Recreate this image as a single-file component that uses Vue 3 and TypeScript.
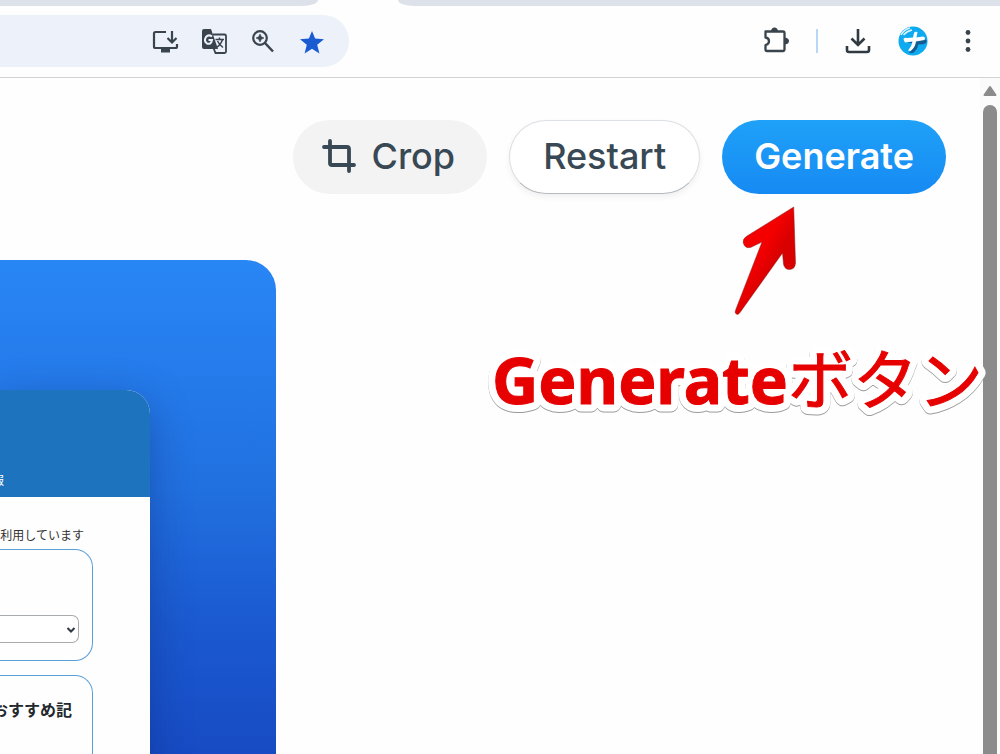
<script setup lang="ts">
import { ref } from 'vue'

const bookmarked = ref(true)
const category = ref('')
</script>

<template>
  <div class="window">
    <div class="tabs">
      <span class="tab tab-left"></span>
      <span class="tab tab-right"></span>
    </div>

    <header class="toolbar">
      <div class="address">
        <button class="icon" aria-label="Install">
          <svg width="28" height="28" viewBox="0 0 28 28" fill="none" stroke="#3a444c" stroke-width="2.2">
            <path d="M15 4H4.500Q3 4 3 5.500V18.500Q3 20 4.500 20H24.500Q26 20 26 18.500V16" />
            <path d="M21 3V14M16.500 10L21 14.500L25.500 10" />
            <path d="M10 22.500H19" stroke-width="4" />
          </svg>
        </button>
        <button class="icon" aria-label="Translate">
          <svg width="28" height="28" viewBox="0 0 28 28">
            <path d="M3 1H11L18 21H4Q2 21 2 19V3Q2 1 4 1Z" fill="#3a444c" />
            <path d="M13 6.500H24.500Q26 6.500 26 8V23.500Q26 25 24.500 25H15.500L13.500 20" fill="none" stroke="#3a444c" stroke-width="1.800" />
            <path d="M12 8.500Q8.500 6 6 9Q3.500 13 7 15.500Q11 17 12 12H8.500" fill="none" stroke="#ecf1fa" stroke-width="2" />
            <path d="M15.500 11.500H24M19.500 9.500V11.500M22.500 11.500Q21 16.500 16.500 19.500M17.500 13Q19.500 17 23 19.500" fill="none" stroke="#3a444c" stroke-width="1.500" />
          </svg>
        </button>
        <button class="icon" aria-label="Zoom">
          <svg width="28" height="28" viewBox="0 0 28 28" fill="none" stroke="#3a444c" stroke-width="2.200">
            <circle cx="11" cy="10" r="6.800" />
            <path d="M16 15L24 23.500" stroke-width="2.500" />
            <path d="M11 6L12.300 8.700L15 10L12.300 11.300L11 14L9.700 11.300L7 10L9.700 8.700Z" fill="#3a444c" stroke="#3a444c" stroke-width="0.600" />
          </svg>
        </button>
        <button class="icon" aria-label="Bookmark" :aria-pressed="bookmarked" @click="bookmarked = !bookmarked">
          <svg width="28" height="28" viewBox="0 0 28 28">
            <path d="M14 3L17.100 10.600L26 11.200L19.200 16.800L21.400 25.400L14 20.700L6.600 25.400L8.800 16.800L2 11.200L10.900 10.600Z" fill="#1a5bd2" />
          </svg>
        </button>
      </div>

      <div class="actions">
        <button class="icon" aria-label="Extensions">
          <svg width="28" height="28" viewBox="0 0 28 28" fill="none" stroke="#3a444c" stroke-width="2.300" stroke-linejoin="round">
            <path d="M3.500 4.500H21Q22.500 4.500 22.500 6V22Q22.500 24 21 24H5Q3.500 24 3.500 22.500V18Q7 17 7 14.200Q7 11 3.500 10.500Z" />
            <path d="M9 4Q9.500 0.500 12.500 0.500Q15.500 0.500 16 4ZM23 10.500Q27 11 27 14Q27 17 23 17.500Z" fill="#3a444c" stroke="none" />
          </svg>
        </button>
        <span class="divider"></span>
        <button class="icon" aria-label="Downloads">
          <svg width="28" height="28" viewBox="0 0 28 28" fill="none" stroke="#303a42" stroke-width="2.600">
            <path d="M14 2V17M7.500 11.500L14 18L20.500 11.500" />
            <path d="M3 19V23Q3 25 5 25H23Q25 25 25 23V19" />
          </svg>
        </button>
        <button class="icon avatar" aria-label="Profile">
          <svg width="30" height="30" viewBox="0 0 30 30">
            <circle cx="15" cy="15" r="14.500" fill="#0eaaf0" />
            <path d="M3 9Q6 3.500 12 2M5.500 9Q9 5 14 4" stroke="#d9f4ff" stroke-width="1.500" fill="none" />
            <path d="M9 17L26 12L29 15Q28 19 20 18.500Q20 23 15 27L11 27Q16 22 16 17Z" fill="#155a91" />
            <path d="M5.500 13.500Q5.500 11 9 12L15 11.500L16 7Q17 5 19.500 6L18.500 11.500L25 10.500Q28 11 26.500 14L18 15.500Q17 22 12.500 25L10 24.500Q14 20 14.500 15.500L7 16.500Z" fill="#fff" />
          </svg>
        </button>
        <button class="icon" aria-label="Menu">
          <svg width="28" height="28" viewBox="0 0 28 28" fill="#3a444c">
            <circle cx="14" cy="5.500" r="2.400" />
            <circle cx="14" cy="14" r="2.400" />
            <circle cx="14" cy="22.500" r="2.400" />
          </svg>
        </button>
      </div>
    </header>

    <div class="body">
      <main class="content">
        <div class="controls">
          <button class="pill crop">
            <svg width="36" height="36" viewBox="0 0 36 36" fill="none" stroke="#384854" stroke-width="3.800" stroke-linecap="round" stroke-linejoin="round">
              <path d="M9 3V25Q9 27 11 27H33" />
              <path d="M3 9H26Q28 9 28 11V33" />
            </svg>
            Crop
          </button>
          <button class="pill restart">Restart</button>
          <button class="pill generate">Generate</button>
        </div>

        <section class="canvas">
          <article class="site">
            <div class="site-head"><span>報</span></div>
            <div class="site-body">
              <p class="notice">利用しています</p>
              <div class="box">
                <div class="field">
                  <select v-model="category" aria-label="カテゴリー">
                    <option value=""></option>
                  </select>
                  <svg class="caret" width="10" height="8" viewBox="0 0 10 8" fill="none" stroke="#303840" stroke-width="2">
                    <path d="M1.500 2L5 5.500L8.500 2" />
                  </svg>
                </div>
              </div>
              <div class="box picks"><h2>おすすめ記</h2></div>
            </div>
          </article>
        </section>
      </main>

      <div class="scrollbar">
        <svg width="16" height="12" viewBox="0 0 16 12">
          <path d="M8 2L13.500 10H2.500Z" fill="#8b8b8b" stroke="#8b8b8b" stroke-width="2" stroke-linejoin="round" />
        </svg>
        <span class="thumb"></span>
      </div>
    </div>

    <svg class="arrow" width="72" height="120" viewBox="0 0 72 120">
      <defs>
        <linearGradient id="arrow-fill" x1="20" y1="45" x2="55" y2="65" gradientUnits="userSpaceOnUse">
          <stop offset="0.300" stop-color="#f40000" />
          <stop offset="0.750" stop-color="#d90000" />
        </linearGradient>
      </defs>
      <path d="M63.700 7L65.500 63Q65 69.500 59.500 69.500Q54.500 69.500 53.500 64L52.500 53L10 112.500Q7.500 116 5.300 113Q4.800 112 6 109L32 42L21 47.300Q15 49 13.300 43Q12.500 38.500 17 36Z" fill="url(#arrow-fill)" stroke="#8a2020" stroke-width="0.500" />
    </svg>

    <svg class="caption" width="520" height="100" viewBox="0 0 520 100">
      <defs>
        <text id="caption-text" x="10" y="75">Generate<tspan class="kana">ボタン</tspan></text>
      </defs>
      <use class="halo" href="#caption-text" />
      <use class="ink" href="#caption-text" />
    </svg>
  </div>
</template>

<style>
html,
body {
  margin: 0;
  background: #fefefe;
}
</style>

<style scoped>
* {
  box-sizing: border-box;
}

.window {
  position: relative;
  display: flex;
  flex-direction: column;
  height: 100vh;
  overflow: hidden;
  background: #fefefe;
  font-family: Inter, "Noto Sans CJK JP", sans-serif;
  color: #384854;
}

button {
  border: 0;
  padding: 0;
  background: none;
  font: inherit;
  color: inherit;
  cursor: pointer;
}

svg {
  display: block;
}

.tabs {
  display: flex;
  gap: 80px;
  height: 6px;
}

.tab {
  background: #dce1ea;
}

.tab-left {
  width: 318px;
  border-bottom-right-radius: 16px 6px;
}

.tab-right {
  flex: 1;
  border-bottom-left-radius: 16px 6px;
}

.toolbar {
  display: flex;
  align-items: center;
  justify-content: space-between;
  height: 72px;
  padding: 0 18px 2px 0;
  border-bottom: 1px solid #d2d3d5;
}

.address {
  display: flex;
  align-items: center;
  justify-content: flex-end;
  gap: 21px;
  width: 349px;
  height: 52px;
  padding: 2px 23px 0 0;
  border-radius: 0 26px 26px 0;
  background: #ecf1fa;
}

.actions {
  display: flex;
  align-items: center;
  gap: 26px;
}

.divider {
  width: 2px;
  height: 24px;
  background: #b9d8f8;
}

.body {
  display: flex;
  flex: 1;
  min-height: 0;
}

.content {
  flex: 1;
  min-width: 0;
  overflow: hidden;
}

.controls {
  display: flex;
  justify-content: flex-end;
  gap: 22px;
  padding: 42px 34px 66px 0;
}

.pill {
  display: flex;
  align-items: center;
  gap: 14px;
  height: 74px;
  padding: 0 32px 2px;
  border-radius: 37px;
  font-size: 36px;
  font-weight: 500;
  line-height: 44px;
}

.crop {
  padding-left: 28px;
  background: #f3f3f3;
}

.restart {
  padding: 0 33px 2px;
  border: 1px solid #dcdfe3;
  border-bottom-color: #b5babf;
  background: #fff;
  box-shadow: 0 3px 6px rgba(0, 0, 0, 0.06);
}

.generate {
  background: linear-gradient(#1fa1f8, #168af3);
  color: #fff;
  font-weight: 600;
}

.canvas {
  width: 276px;
  height: 560px;
  padding-top: 130px;
  overflow: hidden;
  border-top-right-radius: 30px;
  background: linear-gradient(#2986f5 0, #2170e0 230px, #1b5ad1 360px, #174bc4 494px);
}

.site {
  width: 150px;
  height: 500px;
  overflow: hidden;
  border-top-right-radius: 24px;
  background: #fefefe;
  box-shadow: 0 12px 40px rgba(16, 40, 110, 0.4);
}

.site-head {
  display: flex;
  align-items: flex-end;
  height: 107px;
  padding-bottom: 7px;
  background: #1e73be;
  color: #fff;
  font-size: 12px;
  line-height: 18px;
}

.site-head span {
  display: flex;
  justify-content: flex-end;
  width: 4px;
}

.site-body {
  display: flex;
  flex-direction: column;
  gap: 14px;
  padding: 29px 57px 0 0;
  font-family: "Noto Sans CJK JP", sans-serif;
}

.notice {
  margin: 0 9px -9px 0;
  color: #333;
  font-size: 12px;
  line-height: 18px;
  text-align: right;
  white-space: nowrap;
}

.box {
  height: 112px;
  padding: 65px 13px 0 0;
  border: 1px solid #5b9fd8;
  border-left: 0;
  border-radius: 0 18px 18px 0;
}

.field {
  position: relative;
}

select {
  display: block;
  width: 100%;
  height: 28px;
  border: 1px solid #a8abad;
  border-left: 0;
  border-radius: 0 7px 7px 0;
  background: #fff;
  appearance: none;
}

.caret {
  position: absolute;
  top: 11px;
  right: 3px;
  pointer-events: none;
}

.picks {
  display: flex;
  justify-content: flex-end;
  padding: 21px 20px 0 0;
}

h2 {
  margin: 0;
  color: #22282d;
  font-size: 16px;
  line-height: 24px;
  white-space: nowrap;
}

.scrollbar {
  display: flex;
  flex-direction: column;
  align-items: center;
  gap: 8px;
  width: 20px;
  padding-top: 7px;
  background: #fbfbfb;
}

.thumb {
  flex: 1;
  width: 14px;
  border-radius: 7px 7px 0 0;
  background: #8b8b8b;
}

.arrow {
  position: absolute;
  top: 200px;
  right: 198px;
}

.caption {
  position: absolute;
  top: 329px;
  right: -2px;
  font-family: "Noto Sans", "Noto Sans CJK JP", sans-serif;
  font-size: 64px;
  font-weight: 700;
}

.kana {
  font-family: "Noto Sans CJK JP", sans-serif;
  font-size: 65px;
  font-weight: 400;
}

.halo {
  fill: #fff;
  stroke: #fff;
  stroke-width: 15px;
  stroke-linejoin: round;
  filter: drop-shadow(0 1px 0 #999);
}

.ink {
  fill: #e60000;
  stroke: #e60000;
  stroke-width: 1px;
}
</style>
